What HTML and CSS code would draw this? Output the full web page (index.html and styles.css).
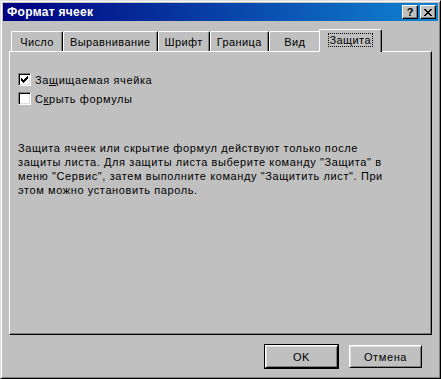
FILE: index.html
```html
<!DOCTYPE html>
<html lang="ru">
<head>
    <meta charset="UTF-8">
    <title>Формат ячеек</title>
    <link rel="stylesheet" href="styles.css">
</head>
<body>

<div class="window">
    <div class="titlebar">
        <span class="title">Формат ячеек</span>
        <div class="caption-buttons">
            <button class="cap help">?</button>
            <button class="cap close">
                <svg width="8" height="7" viewBox="0 0 8 7" shape-rendering="crispEdges">
                    <path d="M0 0h2v1h1v1h2v-1h1v-1h2v1h-1v1h-1v1h-1v1h1v1h1v1h1v1h-2v-1h-1v-1h-2v1h-1v1h-2v-1h1v-1h1v-1h1v-1h-1v-1h-1v-1h-1z" fill="#000"/>
                </svg>
            </button>
        </div>
    </div>

    <div class="content">
        <!-- Tabs -->
        <div class="tabs">
            <div class="tab">Число</div>
            <div class="tab">Выравнивание</div>
            <div class="tab">Шрифт</div>
            <div class="tab">Граница</div>
            <div class="tab">Вид</div>
            <div class="tab active"><span class="focus">Защита</span></div>
        </div>

        <div class="panel">
            <label class="check">
                <span class="box">
                    <svg width="7" height="7" viewBox="0 0 7 7" shape-rendering="crispEdges">
                        <path d="M0 2h1v1h1v1h1v-1h1v-1h1v-1h1v-1h1v3h-1v1h-1v1h-1v1h-1v1h-1v-1h-1v-1h-1z" fill="#000"/>
                    </svg>
                </span>
                <span>За<u>щ</u>ищаемая ячейка</span>
            </label>
            <label class="check">
                <span class="box"></span>
                <span>С<u>к</u>рыть формулы</span>
            </label>

            <p class="note">
                Защита ячеек или скрытие формул действуют только после<br>
                защиты листа. Для защиты листа выберите команду "Защита" в<br>
                меню "Сервис", затем выполните команду "Защитить лист". При<br>
                этом можно установить пароль.
            </p>
        </div>

        <div class="actions">
            <button class="btn default">OK</button>
            <button class="btn">Отмена</button>
        </div>
    </div>
</div>

</body>
</html>
```

FILE: styles.css
```css
body {
    margin: 0;
    background: #c0c0c0;
    font-family: "Liberation Sans", Arial, sans-serif;
    font-size: 11px;
    letter-spacing: 0.6px;
    color: #000;
}

.window {
    width: 441px;
    height: 379px;
    box-sizing: border-box;
    border: 1px solid;
    border-color: #dfdfdf #000 #000 #dfdfdf;
    box-shadow: inset 1px 1px #fff, inset -1px -1px #808080;
    padding: 2px;
    background: #c0c0c0;
    display: flex;
    flex-direction: column;
}

/* Title bar */
.titlebar {
    height: 18px;
    background: linear-gradient(to right, #000080, #1084d0);
    display: flex;
    align-items: center;
    justify-content: space-between;
    padding-left: 4px;
}

.title {
    color: #fff;
    font-weight: bold;
    font-size: 12px;
    letter-spacing: 0.3px;
}

.caption-buttons {
    display: flex;
    gap: 2px;
    margin-right: 2px;
}

.cap {
    width: 16px;
    height: 14px;
    padding: 0;
    background: #c0c0c0;
    border: 1px solid;
    border-color: #fff #000 #000 #fff;
    box-shadow: inset -1px -1px #808080;
    display: flex;
    align-items: center;
    justify-content: center;
    font-family: "Liberation Sans", Arial, sans-serif;
    font-weight: bold;
    font-size: 11px;
    line-height: 1;
    color: #000;
}

.cap svg {
    display: block;
}

/* Tabs and panel */
.content {
    flex: 1;
    padding: 8px 6px 0;
    display: flex;
    flex-direction: column;
}

.tabs {
    display: flex;
    align-items: flex-end;
    height: 22px;
    padding-left: 2px;
    position: relative;
    z-index: 1;
    letter-spacing: 0.4px;
}

.tab {
    height: 20px;
    min-width: 52px;
    box-sizing: border-box;
    padding: 0 6px;
    display: flex;
    align-items: center;
    justify-content: center;
    border-top: 1px solid #fff;
    border-left: 1px solid #fff;
    border-right: 1px solid #000;
    border-radius: 2px 2px 0 0;
    box-shadow: inset -1px 0 #808080;
}

.tab.active {
    height: 23px;
    min-width: 63px;
    margin: 0 -2px -1px;
    padding: 0 6px 2px;
    background: #c0c0c0;
}

.tab .focus {
    outline: 1px dotted #000;
    padding: 0 1px;
}

.panel {
    height: 284px;
    box-sizing: border-box;
    border: 1px solid;
    border-color: #fff #000 #000 #fff;
    box-shadow: inset -1px -1px #808080;
    padding: 21px 8px 0;
}

.check {
    display: flex;
    align-items: center;
    gap: 4px;
    height: 13px;
    margin-bottom: 6px;
}

.box {
    width: 13px;
    height: 13px;
    box-sizing: border-box;
    background: #fff;
    border: 1px solid;
    border-color: #808080 #fff #fff #808080;
    box-shadow: inset 1px 1px #000, inset -1px -1px #dfdfdf;
    display: flex;
    align-items: center;
    justify-content: center;
}

.box svg {
    display: block;
}

.note {
    margin: 36px 0 0;
    line-height: 14px;
    white-space: nowrap;
}

/* Bottom buttons */
.actions {
    display: flex;
    justify-content: flex-end;
    gap: 11px;
    margin-top: 10px;
    padding-right: 10px;
}

.btn {
    width: 73px;
    height: 23px;
    background: #c0c0c0;
    border: 1px solid;
    border-color: #fff #000 #000 #fff;
    box-shadow: inset 1px 1px #dfdfdf, inset -1px -1px #808080;
    font-family: "Liberation Sans", Arial, sans-serif;
    font-size: 11px;
    letter-spacing: 0.6px;
    color: #000;
    padding: 0;
}

.btn.default {
    outline: 1px solid #000;
}
```
